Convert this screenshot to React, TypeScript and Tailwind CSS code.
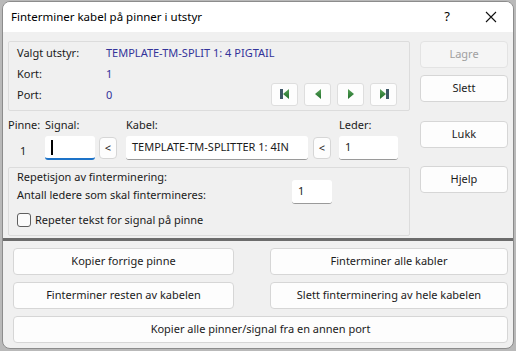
import React from 'react';

const font = { fontFamily: '"Noto Sans", "Open Sans", sans-serif' };

function Btn({ children, disabled, className = '' }: { children: React.ReactNode; disabled?: boolean; className?: string }) {
  return (
    <button
      className={`flex items-center justify-center whitespace-nowrap rounded-[4px] border text-[11px] ${
        disabled ? 'border-[#e3e3e3] bg-[#f5f5f5] text-[#a0a0a0]' : 'border-[#d6d6d6] bg-[#fdfdfd] text-[#1b1b1b]'
      } ${className}`}
    >
      {children}
    </button>
  );
}

function Field({ value, className = '', focused }: { value: string; className?: string; focused?: boolean }) {
  return (
    <div
      className={`flex h-[24px] items-center whitespace-nowrap rounded-[3px] bg-white px-[6px] text-[11px] text-[#1b1b1b] ${
        focused ? 'border-b-2 border-[#1d73c8]' : 'border-b border-[#9a9a9a]'
      } ${className}`}
    >
      {focused ? <span className="h-[15px] w-[1.5px] bg-black" /> : value}
    </div>
  );
}

function NavBtn({ kind }: { kind: 'first' | 'prev' | 'next' | 'last' }) {
  return (
    <button className="flex h-[23px] w-[27px] items-center justify-center rounded-[3px] border border-[#dedede] bg-[#fdfdfd]">
      <svg width="14" height="14" viewBox="0 0 14 14">
        <defs>
          <linearGradient id={`g-${kind}`} x1="0" y1="0" x2="0" y2="1">
            <stop offset="0" stopColor="#5aa35a" />
            <stop offset="1" stopColor="#1f6e2a" />
          </linearGradient>
        </defs>
        {kind === 'first' && (
          <>
            <rect x="2" y="2" width="3" height="10" fill="#3e5866" />
            <polygon points="11,2 5,7 11,12" fill={`url(#g-${kind})`} />
          </>
        )}
        {kind === 'prev' && <polygon points="10,2 4,7 10,12" fill={`url(#g-${kind})`} />}
        {kind === 'next' && <polygon points="4,2 10,7 4,12" fill={`url(#g-${kind})`} />}
        {kind === 'last' && (
          <>
            <polygon points="3,2 9,7 3,12" fill={`url(#g-${kind})`} />
            <rect x="9" y="2" width="3" height="10" fill="#3e5866" />
          </>
        )}
      </svg>
    </button>
  );
}

export default function App() {
  return (
    <div className="h-[351px] w-[516px] overflow-hidden bg-[#b9b9b9] pl-[2px] pr-[2px] pt-[1px]" style={font}>
      <div className="flex h-[348px] flex-col overflow-hidden rounded-[8px] border border-[#8c8c8c] bg-[#f0f0f0]">
        {/* title bar */}
        <div className="flex h-[30px] shrink-0 items-center bg-white pl-[8px]">
          <span className="flex-1 text-[11.5px] text-black">Finterminer kabel på pinner i utstyr</span>
          <span className="w-[44px] text-center text-[13px] text-black">?</span>
          <span className="flex w-[44px] items-center justify-center">
            <svg width="12" height="12" viewBox="0 0 12 12">
              <path d="M1 1 L11 11 M11 1 L1 11" stroke="#111" strokeWidth="1.1" />
            </svg>
          </span>
        </div>

        <div className="flex flex-1 flex-col">
          <div className="flex pt-[9px]">
            {/* left column */}
            <div className="ml-[5px] w-[402px]">
              <div className="h-[70px] rounded-[2px] border border-[#dcdcdc] pl-[8px] pr-[12px] pt-[1px] text-[11px] text-[#1b1b1b]">
                <div className="flex h-[21px] items-center">
                  <span className="w-[89px]">Valgt utstyr:</span>
                  <span className="text-[#33339a]">TEMPLATE-TM-SPLIT 1: 4 PIGTAIL</span>
                </div>
                <div className="flex h-[21px] items-center">
                  <span className="w-[89px]">Kort:</span>
                  <span className="text-[#33339a]">1</span>
                </div>
                <div className="flex h-[21px] items-center">
                  <span className="w-[89px]">Port:</span>
                  <span className="text-[#33339a]">0</span>
                  <div className="ml-auto -mt-[3px] flex gap-[6px]">
                    <NavBtn kind="first" />
                    <NavBtn kind="prev" />
                    <NavBtn kind="next" />
                    <NavBtn kind="last" />
                  </div>
                </div>
              </div>

              {/* pin row */}
              <div className="mt-[6px] flex text-[11px] text-[#1b1b1b]">
                <div className="flex w-[37px] flex-col">
                  <span className="h-[18px]">Pinne:</span>
                  <span className="mt-[8px] pl-[12px]">1</span>
                </div>
                <div className="flex flex-col">
                  <span className="h-[18px]">Signal:</span>
                  <div className="mt-[1px] flex items-center gap-[4px]">
                    <Field value="" focused className="w-[50px]" />
                    <Btn className="h-[22px] w-[18px]">&lt;</Btn>
                  </div>
                </div>
                <div className="ml-[9px] flex flex-col">
                  <span className="h-[18px]">Kabel:</span>
                  <div className="mt-[1px] flex items-center gap-[5px]">
                    <Field value="TEMPLATE-TM-SPLITTER 1: 4IN" className="w-[182px]" />
                    <Btn className="h-[22px] w-[18px]">&lt;</Btn>
                  </div>
                </div>
                <div className="ml-[8px] flex flex-col">
                  <span className="h-[18px]">Leder:</span>
                  <div className="mt-[1px]">
                    <Field value="1" className="w-[59px]" />
                  </div>
                </div>
              </div>

              {/* repetition group */}
              <div className="mt-[7px] h-[69px] rounded-[2px] border border-[#dcdcdc] pl-[8px] pt-[1px] text-[11px] text-[#1b1b1b]">
                <div className="flex h-[17px] items-center">Repetisjon av finterminering:</div>
                <div className="flex h-[19px] items-center">
                  <span className="w-[275px]">Antall ledere som skal fintermineres:</span>
                  <Field value="1" className="-mt-[8px] w-[40px]" />
                </div>
                <div className="mt-[7px] flex items-center gap-[4px]">
                  <span className="h-[14px] w-[14px] rounded-[3px] border border-[#5f5f5f] bg-[#fbfbfb]" />
                  <span>Repeter tekst for signal på pinne</span>
                </div>
              </div>
            </div>

            {/* right column */}
            <div className="ml-[10px] flex flex-col">
              <Btn disabled className="h-[27px] w-[88px]">Lagre</Btn>
              <Btn className="mt-[7px] h-[27px] w-[88px]">Slett</Btn>
              <Btn className="mt-[19px] h-[27px] w-[88px]">Lukk</Btn>
              <Btn className="mt-[18px] h-[27px] w-[88px]">Hjelp</Btn>
            </div>
          </div>

          <div className="mt-[2px] h-[3px] bg-[#6c6c6c]" />

          <div className="flex flex-col gap-[7px] pl-[10px] pr-[5px] pt-[7px]">
            <div className="flex justify-between">
              <Btn className="h-[27px] w-[221px]">Kopier forrige pinne</Btn>
              <Btn className="h-[27px] w-[238px]">Finterminer alle kabler</Btn>
            </div>
            <div className="flex justify-between">
              <Btn className="h-[27px] w-[221px]">Finterminer resten av kabelen</Btn>
              <Btn className="h-[27px] w-[238px]">Slett finterminering av hele kabelen</Btn>
            </div>
            <Btn className="h-[27px] w-full">Kopier alle pinner/signal fra en annen port</Btn>
          </div>
        </div>
      </div>
    </div>
  );
}
